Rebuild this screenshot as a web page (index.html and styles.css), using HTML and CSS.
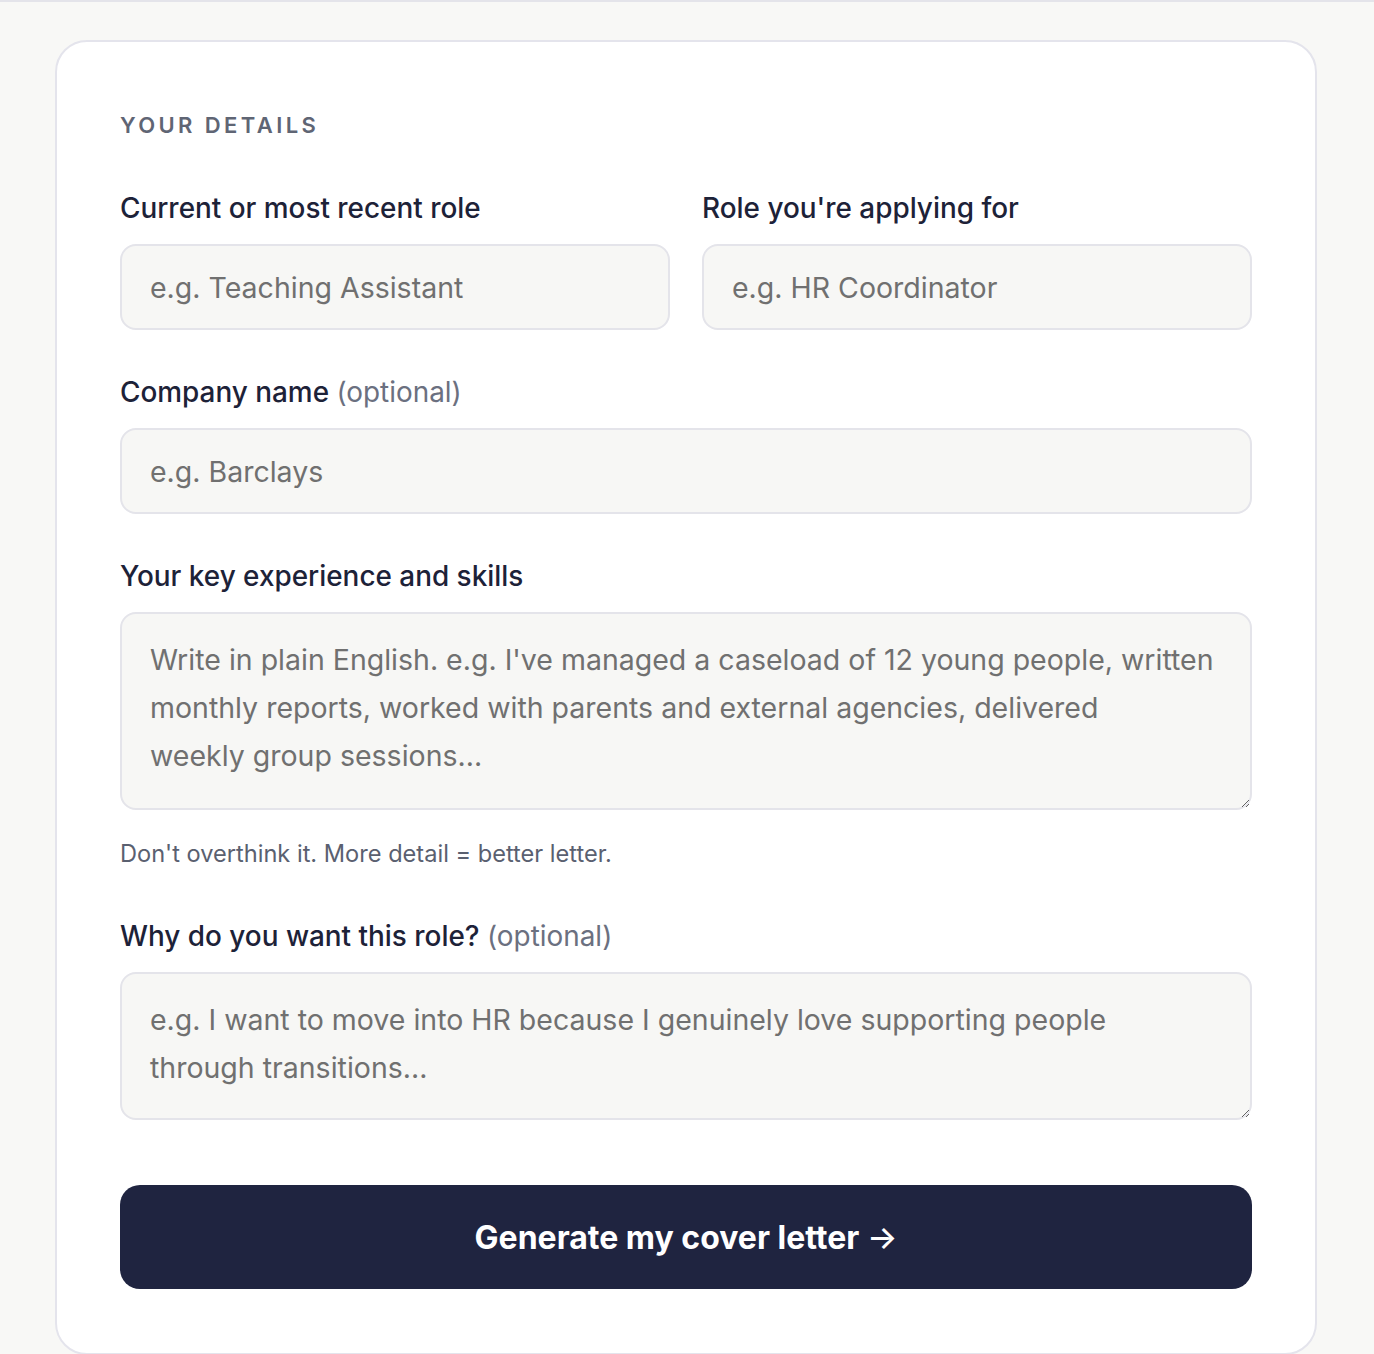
FILE: index.html
```html
<!DOCTYPE html>
<html lang="en">
<head>
<meta charset="utf-8">
<title>Cover letter generator</title>
<link rel="stylesheet" href="styles.css">
</head>
<body>
<div class="topbar"></div>
<main class="page">
  <form class="card">
    <h2 class="section-title">YOUR DETAILS</h2>
    <div class="row two">
      <div class="field">
        <label class="label" for="current">Current or most recent role</label>
        <input class="input" id="current" type="text" placeholder="e.g. Teaching Assistant">
      </div>
      <div class="field">
        <label class="label" for="target">Role you're applying for</label>
        <input class="input" id="target" type="text" placeholder="e.g. HR Coordinator">
      </div>
    </div>
    <div class="field">
      <label class="label" for="company">Company name <span class="opt">(optional)</span></label>
      <input class="input" id="company" type="text" placeholder="e.g. Barclays">
    </div>
    <div class="field">
      <label class="label" for="exp">Your key experience and skills</label>
      <textarea class="textarea tall" id="exp" placeholder="Write in plain English. e.g. I've managed a caseload of 12 young people, written&#10;monthly reports, worked with parents and external agencies, delivered&#10;weekly group sessions..."></textarea>
      <p class="hint">Don't overthink it. More detail = better letter.</p>
    </div>
    <div class="field">
      <label class="label" for="why">Why do you want this role? <span class="opt">(optional)</span></label>
      <textarea class="textarea short" id="why" placeholder="e.g. I want to move into HR because I genuinely love supporting people&#10;through transitions..."></textarea>
    </div>
    <button class="submit" type="button">Generate my cover letter <span class="arrow">→</span></button>
  </form>
</main>
</body>
</html>
```
FILE: styles.css
```css
* { box-sizing: border-box; }
html, body { margin: 0; padding: 0; }
body {
  background: #f8f8f6;
  font-family: "Inter", "Noto Sans", sans-serif;
  color: #1d2238;
}
.topbar {
  height: 2px;
  border-bottom: 2px solid #e4e4ea;
}
.page {
  padding: 38px 57px 0 55px;
}
.card {
  background: #fff;
  border: 2px solid #e4e4ec;
  border-radius: 32px;
  padding: 64px 63px 64px 63px;
  display: flex;
  flex-direction: column;
  gap: 44px;
}
.section-title {
  margin: 0 0 2px 0;
  font-size: 22px;
  line-height: 38px;
  font-weight: 600;
  letter-spacing: 3.4px;
  color: #5f6574;
}
.row.two {
  display: grid;
  grid-template-columns: 1fr 1fr;
  gap: 32px;
}
.field {
  display: flex;
  flex-direction: column;
}
.label {
  font-size: 27.9px;
  line-height: 36px;
  font-weight: 500;
  color: #1d2238;
  margin-bottom: 18px;
}
.opt {
  font-weight: 400;
  color: #6b7080;
}
.input, .textarea {
  width: 100%;
  font-family: inherit;
  font-size: 28.5px;
  color: #1d2238;
  background: #f7f7f5;
  border: 2px solid #e4e4ea;
  border-radius: 16px;
  outline: none;
}
.input {
  height: 86px;
  padding: 0 28px;
}
.textarea {
  padding: 22px 28px;
  line-height: 48px;
  resize: vertical;
  display: block;
}
.input::placeholder, .textarea::placeholder {
  color: #707070;
  opacity: 1;
}
.textarea.tall { height: 198px; }
.textarea.short { height: 148px; }
.hint {
  margin: 30px 0 6px 0;
  font-size: 23.6px;
  line-height: 28px;
  color: #5a6070;
}
.submit {
  margin-top: 21px;
  height: 104px;
  border: none;
  border-radius: 20px;
  background: #1f2440;
  color: #fff;
  font-family: inherit;
  font-size: 32px;
  font-weight: 700;
  cursor: pointer;
}
.arrow {
  font-weight: 500;
}
```
